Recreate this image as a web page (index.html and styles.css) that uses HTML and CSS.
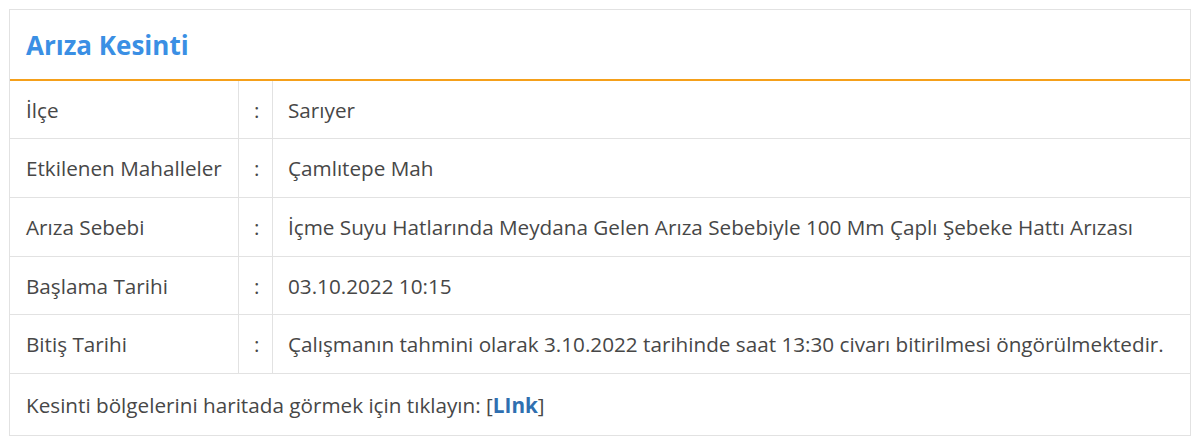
FILE: index.html
```html
<!DOCTYPE html>
<html lang="tr">
<head>
<meta charset="utf-8">
<link rel="stylesheet" href="styles.css">
</head>
<body>
<div class="panel">
  <div class="panel-head"><h2 class="panel-title">Arıza Kesinti</h2></div>
  <table class="info">
    <tr><td class="k">İlçe</td><td class="c">:</td><td class="v">Sarıyer</td></tr>
    <tr><td class="k">Etkilenen Mahalleler</td><td class="c">:</td><td class="v">Çamlıtepe Mah</td></tr>
    <tr><td class="k">Arıza Sebebi</td><td class="c">:</td><td class="v">İçme Suyu Hatlarında Meydana Gelen Arıza Sebebiyle 100 Mm Çaplı Şebeke Hattı Arızası</td></tr>
    <tr><td class="k">Başlama Tarihi</td><td class="c">:</td><td class="v">03.10.2022 10:15</td></tr>
    <tr><td class="k">Bitiş Tarihi</td><td class="c">:</td><td class="v">Çalışmanın tahmini olarak 3.10.2022 tarihinde saat 13:30 civarı bitirilmesi öngörülmektedir.</td></tr>
    <tr><td class="foot" colspan="3">Kesinti bölgelerini haritada görmek için tıklayın: [<a class="lnk" href="#">LInk</a>]</td></tr>
  </table>
</div>
</body>
</html>
```
FILE: styles.css
```css
html, body { margin: 0; padding: 0; background: #fff; }
body {
  padding: 9px 9px 0 9px;
  font-family: "Open Sans", "Liberation Sans", sans-serif;
  font-size: 20.7px;
  color: #474747;
}
.panel {
  border: 1px solid #e2e2e2;
  width: 1180px;
}
.panel-head {
  height: 69px;
  border-bottom: 2px solid #f5a01a;
  display: flex;
  align-items: center;
  padding-left: 16px;
}
.panel-title {
  margin: 0;
  font-size: 26px;
  font-weight: 700;
  color: #3a8fe4;
}
.info {
  width: 100%;
  border-collapse: collapse;
}
.info td {
  border-top: 1px solid #e2e2e2;
  height: 58px;
  padding: 0 16px;
  vertical-align: middle;
}
.info tr:first-child td { border-top: 0; height: 57px; }
.info tr:nth-child(4) td { height: 57px; }
.info td.k { width: 196px; border-right: 1px solid #e2e2e2; }
.info td.c { padding: 0 0 0 15px; text-align: left; border-right: 1px solid #e2e2e2; width: 18px; }
.info td.v { padding-left: 15px; }
.info td.foot { height: 61px; }
.lnk { color: #2f6fb0; font-weight: 700; text-decoration: none; }
```
